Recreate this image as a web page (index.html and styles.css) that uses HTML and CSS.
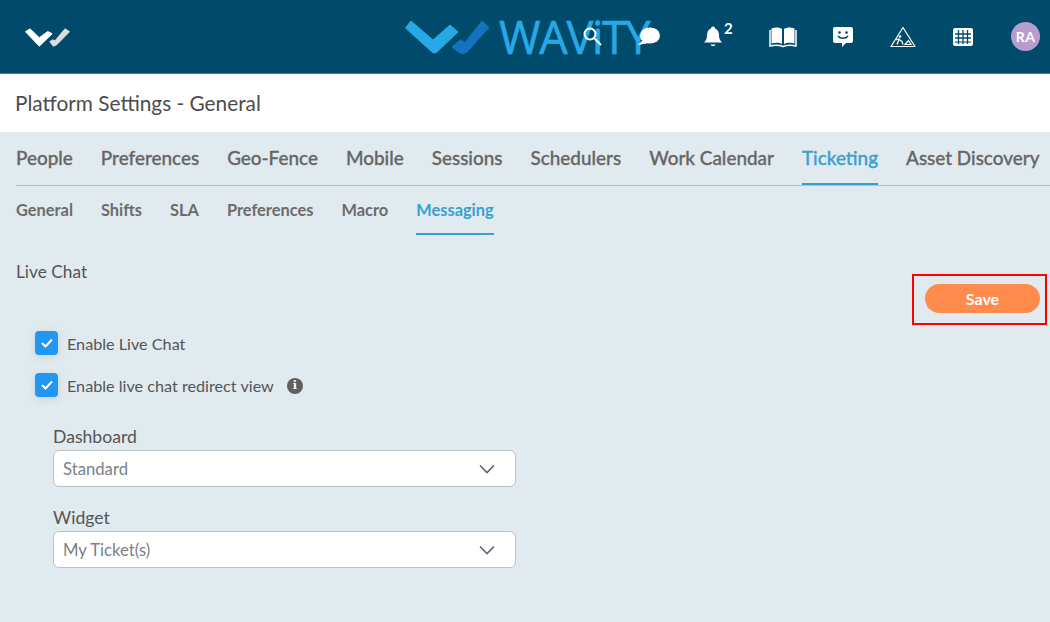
FILE: index.html
```html
<!DOCTYPE html>
<html lang="en">
<head>
<meta charset="utf-8">
<title>Platform Settings - General</title>
<link rel="stylesheet" href="styles.css">
</head>
<body>
<header class="topbar">
  <svg class="brand-mark" width="48" height="21" viewBox="0 0 48 21">
    <path d="M1.500 4.700 L6 1.800 L15.300 10.700 L23.700 4.500 L28.200 6.700 L15.300 19.200 Z" fill="#fff" stroke="#fff" stroke-linejoin="round"/>
    <path d="M25.800 14.700 L28.700 12.800 L31 13.800 L41 1.800 L45.500 4.700 L32.700 17.800 L29.300 19.200 Z" fill="#dcdcdc" stroke="#dcdcdc" stroke-linejoin="round"/>
  </svg>
  <div class="watermark">
    <svg width="88" height="37" viewBox="0 0 88 37">
      <path d="M1.500 9 L7 2 L29 21 L46 6 L54 13 L33 33 Q30.500 35 28 33 Z" fill="#27a9e5" stroke="#27a9e5" stroke-linejoin="round"/>
      <path d="M48 28 L56 21 L61 23.500 L78 2 L85 8.500 L63 33 Q59 36 55 33.500 Z" fill="#1274bd" stroke="#1274bd" stroke-linejoin="round"/>
    </svg>
    <span class="watermark-text">WAViTY</span>
  </div>
  <nav class="top-icons">
    <svg class="ic ic-search" width="20" height="22" viewBox="0 0 20 22"><circle cx="8" cy="8" r="5.500" fill="none" stroke="#fff" stroke-width="2"/><path d="M12 12 L19 19" stroke="#fff" stroke-width="2"/></svg>
    <svg class="ic ic-chat" width="22" height="20" viewBox="0 0 22 20"><ellipse cx="12" cy="8.500" rx="10" ry="8" fill="#fff"/><path d="M5 13 L0 18 L11 16 Z" fill="#fff"/></svg>
    <span class="bell">
      <svg width="20" height="23" viewBox="0 0 20 22"><path d="M10 1 C11.500 1 12 2 12 3 C15 4 16 7 16 10 C16 13 17 15 19 17 L1 17 C3 15 4 13 4 10 C4 7 5 4 8 3 C8 2 8.500 1 10 1 Z" fill="#fff"/><path d="M7.500 19 H12.500 C12 21 8 21 7.500 19 Z" fill="#fff"/></svg>
      <sup class="bell-count">2</sup>
    </span>
    <svg class="ic ic-book" width="28" height="22" viewBox="0 0 28 22"><path d="M2.500 2.500 C6 1 10 1 13 3 V18 C10 16.500 6 16.500 2.500 17.500 Z M25.500 2.500 C22 1 18 1 15 3 V18 C18 16.500 22 16.500 25.500 17.500 Z" fill="#fff"/><path d="M1 4 V20 C5 19 10 19 14 20.500 C18 19 23 19 27 20 V4" fill="none" stroke="#fff" stroke-width="1.500"/></svg>
    <svg class="ic ic-smile" width="22" height="22" viewBox="0 0 22 22"><path d="M3 1 H19 A2 2 0 0 1 21 3 V15 A2 2 0 0 1 19 17 H14 L10 21 V17 H3 A2 2 0 0 1 1 15 V3 A2 2 0 0 1 3 1 Z" fill="#fff"/><circle cx="7.500" cy="6.500" r="1.300" fill="#004b6b"/><circle cx="14.500" cy="6.500" r="1.300" fill="#004b6b"/><path d="M6 10 C8 13 14 13 16 10" fill="none" stroke="#004b6b" stroke-width="1.500"/></svg>
    <svg class="ic ic-work" width="26" height="22" viewBox="0 0 26 22"><path d="M13 1.500 L25 20.500 H1 Z" fill="none" stroke="#fff" stroke-width="1.200" stroke-linejoin="round"/><circle cx="10" cy="10.500" r="1.300" fill="#fff"/><path d="M7 18.500 L9 13.500 L12 15.500 L13 18.500 M6 14 L9.500 12.500 M15 18.500 H21 L18.500 14.500 Z" fill="none" stroke="#fff" stroke-width="1.200"/></svg>
    <svg class="ic ic-grid" width="20" height="18" viewBox="0 0 20 18"><rect width="20" height="18" rx="2" fill="#fff"/><path d="M5.500 2 V16 M10 2 V16 M14.500 2 V16 M2 6 H18 M2 10 H18" stroke="#004b6b" stroke-width="1.300"/><path d="M2 14 H18" stroke="#004b6b" stroke-width="1"/></svg>
    <span class="avatar">RA</span>
  </nav>
</header>

<div class="page-title">Platform Settings - General</div>

<main class="content">
  <div class="tabs">
    <a class="tab">People</a>
    <a class="tab">Preferences</a>
    <a class="tab">Geo-Fence</a>
    <a class="tab">Mobile</a>
    <a class="tab">Sessions</a>
    <a class="tab">Schedulers</a>
    <a class="tab">Work Calendar</a>
    <a class="tab active">Ticketing</a>
    <a class="tab">Asset Discovery</a>
  </div>
  <div class="subtabs">
    <a class="subtab">General</a>
    <a class="subtab">Shifts</a>
    <a class="subtab">SLA</a>
    <a class="subtab">Preferences</a>
    <a class="subtab">Macro</a>
    <a class="subtab active">Messaging</a>
  </div>

  <div class="section">
    <h2 class="section-title">Live Chat</h2>
    <div class="save-frame"><button class="save">Save</button></div>
    <div class="checks">
      <label class="check">
        <span class="box"><svg width="14" height="12" viewBox="0 0 14 12"><path d="M2 6 L5.500 9.500 L12 2.500" fill="none" stroke="#fff" stroke-width="2"/></svg></span>
        Enable Live Chat
      </label>
      <label class="check">
        <span class="box"><svg width="14" height="12" viewBox="0 0 14 12"><path d="M2 6 L5.500 9.500 L12 2.500" fill="none" stroke="#fff" stroke-width="2"/></svg></span>
        Enable live chat redirect view
        <span class="info">i</span>
      </label>
    </div>
    <div class="field">
      <div class="field-label">Dashboard</div>
      <div class="select">Standard
        <svg width="16" height="10" viewBox="0 0 16 10"><path d="M1 1.500 L8 8.500 L15 1.500" fill="none" stroke="#5b6470" stroke-width="1.600"/></svg>
      </div>
    </div>
    <div class="field">
      <div class="field-label">Widget</div>
      <div class="select">My Ticket(s)
        <svg width="16" height="10" viewBox="0 0 16 10"><path d="M1 1.500 L8 8.500 L15 1.500" fill="none" stroke="#5b6470" stroke-width="1.600"/></svg>
      </div>
    </div>
  </div>
</main>
</body>
</html>
```
FILE: styles.css
```css
* { box-sizing: border-box; }
html, body { margin: 0; height: 100%; overflow: hidden; }
body { background: #e1eaef; font-family: Lato, "Liberation Sans", sans-serif; color: #555; }

.topbar {
  position: relative;
  height: 74px;
  background: #004b6b;
  border-bottom: 1px solid #2b86ac;
  display: flex;
  align-items: center;
  padding-left: 24px;
}
.brand-mark { display: block; margin-top: 1px; }
.watermark {
  position: absolute;
  left: 404px;
  top: 18px;
  display: flex;
  align-items: center;
  gap: 7px;
}
.watermark-text {
  font-family: "Open Sans", sans-serif;
  font-size: 45px;
  line-height: 38px;
  color: #27a9e5;
  letter-spacing: -1.300px;
  -webkit-text-stroke: .6px #27a9e5;
}
.top-icons {
  position: absolute;
  inset: 0 10px 0 0;
  display: flex;
  align-items: center;
  justify-content: flex-end;
}
.ic, .bell, .avatar { flex: none; }
.ic-search { margin-right: 36px; }
.ic-chat { margin-right: 43px; }
.bell { display: flex; margin-right: 25px; width: 41px; align-items: center; }
.bell-count { color: #fff; font-size: 15px; font-weight: 700; margin: -16px 0 0 1px; line-height: 1; }
.ic-book { margin-right: 35px; }
.ic-smile { margin-right: 36px; }
.ic-work { margin-right: 37px; }
.ic-grid { margin-right: 38px; }
.avatar {
  width: 29px; height: 29px; border-radius: 50%;
  background: #b79cce; color: #fff;
  font-size: 14px; font-weight: 700; letter-spacing: .5px;
  display: flex; align-items: center; justify-content: center;
}

.page-title {
  height: 58px;
  background: #fff;
  padding: 0 15px 2px;
  display: flex;
  align-items: center;
  font-size: 20.800px;
  color: #4c4c4c;
}

.content { padding: 0 0 0 16px; }
.tabs {
  display: flex;
  gap: 28px;
  height: 54px;
  border-bottom: 1px solid #b9bdc0;
  white-space: nowrap;
}
.tab {
  font-size: 18.900px;
  font-weight: 500;
  color: #666;
  line-height: 52px;
  height: 53px;
  -webkit-text-stroke: .3px #666;
}
.tab.active { color: #3a9fd0; border-bottom: 2px solid #3a9fd0; -webkit-text-stroke-color: #3a9fd0; }
.subtabs { display: flex; gap: 28px; height: 49px; }
.subtab {
  font-size: 16.400px;
  font-weight: 700;
  color: #6c6c6c;
  line-height: 47px;
  height: 49px;
}
.subtab.active { color: #3a9fd0; border-bottom: 2px solid #3a9fd0; }

.section { position: relative; padding-top: 26px; }
.section-title { margin: 0; font-size: 17.300px; font-weight: 400; color: #555; line-height: 22px; }
.save-frame {
  position: absolute;
  right: 3px;
  top: 39px;
  width: 135px;
  height: 51px;
  border: 2px solid #f00;
  display: flex;
  align-items: center;
  justify-content: flex-end;
  padding: 0 5px 2px 0;
}
.save {
  width: 115px;
  height: 29px;
  border: 0;
  border-radius: 15px;
  background: #ff8c4c;
  color: #fff;
  font: 700 16px Lato, sans-serif;
  padding: 0;
}
.checks { display: flex; flex-direction: column; gap: 18px; padding: 48px 0 0 19px; }
.check { display: flex; align-items: center; font-size: 16.200px; color: #555; height: 24px; }
.box {
  width: 23px; height: 24px; border-radius: 4px;
  background: #2196f3;
  box-shadow: 0 2px 8px rgba(80,110,140,.18);
  display: flex; align-items: center; justify-content: center;
  margin-right: 9px;
}
.info {
  width: 16px; height: 16px; border-radius: 50%;
  background: #5f5f5f; color: #fff;
  font: 700 11px/16px "DejaVu Serif", serif;
  text-align: center;
  margin: 1px 0 0 13px;
}
.field { margin: 0 0 0 37px; width: 462.500px; }
.checks + .field { margin-top: 29px; }
.field + .field { margin-top: 20px; }
.field-label { font-size: 17.600px; line-height: 22px; color: #555; margin-bottom: 2px; }
.select {
  height: 37px;
  background: #fff;
  border: 1px solid #bcc1c5;
  border-radius: 6px;
  padding: 0 20px 0 9px;
  display: flex;
  align-items: center;
  justify-content: space-between;
  font-size: 16.700px;
  color: #7a818a;
}
```
